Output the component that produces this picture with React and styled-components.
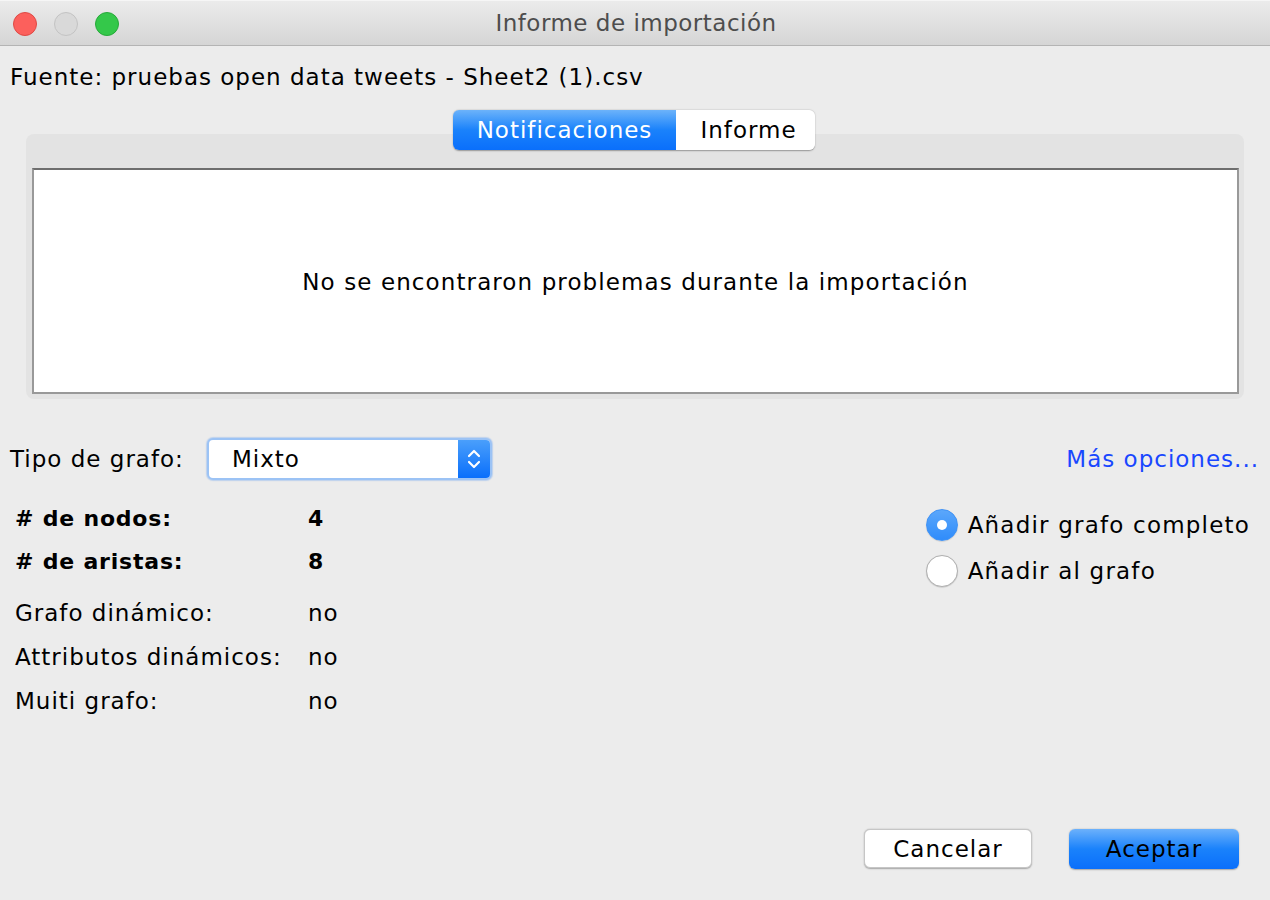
import React from "react";
import styled, { createGlobalStyle } from "styled-components";

const GlobalStyle = createGlobalStyle`
  html, body {
    margin: 0;
    padding: 0;
    background: #ececec;
  }
  body {
    font-family: "DejaVu Sans", "Noto Sans", sans-serif;
    font-size: 23px;
    letter-spacing: 1px;
    color: #000;
  }
`;

const Window = styled.div`
  width: 1270px;
  height: 900px;
  display: flex;
  flex-direction: column;
  background: #ececec;
  overflow: hidden;
`;

const TitleBar = styled.div`
  height: 44px;
  flex-shrink: 0;
  position: relative;
  display: flex;
  align-items: center;
  justify-content: center;
  background: linear-gradient(#ebebeb, #d5d5d5);
  border-bottom: 1px solid #b4b4b4;
  border-top: 1px solid #f6f6f6;
`;

const Lights = styled.div`
  position: absolute;
  left: 13px;
  top: 11px;
  display: flex;
  gap: 17px;
`;

const Light = styled.span`
  width: 24px;
  height: 24px;
  border-radius: 50%;
  box-sizing: border-box;
  background: ${(p) => p.color};
  border: 1px solid ${(p) => p.edge};
`;

const Title = styled.div`
  font-size: 23px;
  letter-spacing: 0.5px;
  color: #4d4d4d;
  padding-left: 2px;
`;

const Body = styled.div`
  flex: 1;
  display: flex;
  flex-direction: column;
  padding: 16px 31px 31px 10px;
`;

const Source = styled.div`
  line-height: 30px;
`;

const TabArea = styled.div`
  position: relative;
  margin: 18px -5px 0 16px;
  padding-top: 24px;
`;

const Tabs = styled.div`
  position: absolute;
  top: 0;
  left: 427px;
  display: flex;
  z-index: 1;
  border-radius: 6px;
  box-shadow: 0 0.5px 1.5px rgba(0, 0, 0, 0.35);
`;

const Tab = styled.div`
  height: 40px;
  width: ${(p) => (p.active ? 223 : 139)}px;
  display: flex;
  align-items: center;
  justify-content: center;
  box-sizing: border-box;
  padding-left: ${(p) => (p.active ? 0 : 6)}px;
  color: ${(p) => (p.active ? "#fff" : "#000")};
  background: ${(p) =>
    p.active ? "linear-gradient(#6cb3fa, #1a82fb 50%, #0a6ffb)" : "#fff"};
  border-radius: ${(p) => (p.active ? "6px 0 0 6px" : "0 6px 6px 0")};
`;

const Panel = styled.div`
  background: #e3e3e3;
  border-radius: 8px;
  padding: 34px 5px 5px 6px;
`;

const Content = styled.div`
  height: 226px;
  background: #fff;
  border: 2px solid #999;
  border-top-color: #6e6e6e;
  box-sizing: border-box;
  display: flex;
  align-items: center;
  justify-content: center;
  padding-top: 2px;
  letter-spacing: 1.1px;
`;

const TypeRow = styled.div`
  margin-top: 38px;
  display: flex;
  align-items: center;
  height: 44px;
`;

const Label = styled.span`
  width: 197px;
`;

const Select = styled.div`
  width: 285px;
  height: 42px;
  box-sizing: border-box;
  display: flex;
  border-radius: 6px;
  border: 2px solid #9cc3f5;
  background: #fff;
  overflow: hidden;
  box-shadow: 0 0 1px 1px rgba(120, 170, 240, 0.4);
`;

const SelectValue = styled.div`
  flex: 1;
  display: flex;
  align-items: center;
  padding-left: 23px;
`;

const Stepper = styled.div`
  width: 32px;
  display: flex;
  align-items: center;
  justify-content: center;
  background: linear-gradient(#4a9ffb, #0a6ffb);
`;

const Link = styled.span`
  margin-left: auto;
  margin-right: -20px;
  color: #1947ff;
`;

const Lower = styled.div`
  display: flex;
  margin-top: 16px;
`;

const Stats = styled.div`
  display: grid;
  grid-template-columns: 293px auto;
  align-content: start;
  padding-left: 5px;
`;

const Cell = styled.div`
  height: ${(p) => p.h}px;
  margin-top: ${(p) => p.gap || 0}px;
  display: flex;
  align-items: center;
  font-weight: ${(p) => (p.bold ? 700 : 400)};
  font-size: ${(p) => (p.bold ? "22px" : "23px")};
  letter-spacing: ${(p) => (p.bold ? "0.8px" : "1px")};
`;

const Radios = styled.div`
  margin-left: auto;
  margin-right: -11px;
  display: flex;
  flex-direction: column;
  gap: 14px;
  padding-top: 12px;
`;

const RadioRow = styled.label`
  display: flex;
  align-items: center;
  gap: 10px;
  height: 32px;
  letter-spacing: 1.2px;
`;

const RadioDot = styled.span`
  width: 32px;
  height: 32px;
  box-sizing: border-box;
  border-radius: 50%;
  display: flex;
  align-items: center;
  justify-content: center;
  background: ${(p) => (p.on ? "linear-gradient(#5ba7fb, #2f8cfb)" : "#fff")};
  border: 1px solid ${(p) => (p.on ? "#3f92f5" : "#b0b0b0")};
  box-shadow: 0 0.5px 1px rgba(0, 0, 0, 0.2);
  &::after {
    content: "";
    display: ${(p) => (p.on ? "block" : "none")};
    width: 10px;
    height: 10px;
    border-radius: 50%;
    background: #fff;
  }
`;

const Footer = styled.div`
  margin-top: auto;
  display: flex;
  justify-content: flex-end;
  gap: 37px;
`;

const Button = styled.button`
  font-family: inherit;
  font-size: 23px;
  letter-spacing: 1px;
  color: #000;
  height: ${(p) => (p.primary ? 40 : 39)}px;
  width: ${(p) => (p.primary ? 170 : 168)}px;
  border-radius: 6px;
  border: ${(p) => (p.primary ? "none" : "1px solid #c6c6c6")};
  background: ${(p) =>
    p.primary ? "linear-gradient(#6cb1fb, #1a82fb 50%, #0a6ffb)" : "#fff"};
  box-shadow: 0 0.5px 1.5px rgba(0, 0, 0, 0.3);
  padding: 0;
`;

const stats = [
  { label: "# de nodos:", value: "4", bold: true, h: 43 },
  { label: "# de aristas:", value: "8", bold: true, h: 43 },
  { label: "Grafo dinámico:", value: "no", h: 44, gap: 8 },
  { label: "Attributos dinámicos:", value: "no", h: 44 },
  { label: "Muiti grafo:", value: "no", h: 44 },
];

const App = () => {
  return (
    <Window>
      <GlobalStyle />
      <TitleBar>
        <Lights>
          <Light color="#fc605c" edge="#de4a45" />
          <Light color="#d9d9d9" edge="#c3c3c3" />
          <Light color="#34c84a" edge="#27a93a" />
        </Lights>
        <Title>Informe de importación</Title>
      </TitleBar>
      <Body>
        <Source>Fuente: pruebas open data tweets - Sheet2 (1).csv</Source>
        <TabArea>
          <Tabs>
            <Tab active>Notificaciones</Tab>
            <Tab>Informe</Tab>
          </Tabs>
          <Panel>
            <Content>No se encontraron problemas durante la importación</Content>
          </Panel>
        </TabArea>
        <TypeRow>
          <Label>Tipo de grafo:</Label>
          <Select>
            <SelectValue>Mixto</SelectValue>
            <Stepper>
              <svg width="16" height="26" viewBox="0 0 16 26" fill="none">
                <path d="M3 10 L8 5 L13 10" stroke="#fff" strokeWidth="2.2" strokeLinecap="round" strokeLinejoin="round" />
                <path d="M3 16 L8 21 L13 16" stroke="#fff" strokeWidth="2.2" strokeLinecap="round" strokeLinejoin="round" />
              </svg>
            </Stepper>
          </Select>
          <Link>Más opciones...</Link>
        </TypeRow>
        <Lower>
          <Stats>
            {stats.map((s) => (
              <React.Fragment key={s.label}>
                <Cell bold={s.bold} h={s.h} gap={s.gap}>{s.label}</Cell>
                <Cell bold={s.bold} h={s.h} gap={s.gap}>{s.value}</Cell>
              </React.Fragment>
            ))}
          </Stats>
          <Radios>
            <RadioRow>
              <RadioDot on />
              Añadir grafo completo
            </RadioRow>
            <RadioRow>
              <RadioDot />
              Añadir al grafo
            </RadioRow>
          </Radios>
        </Lower>
        <Footer>
          <Button>Cancelar</Button>
          <Button primary>Aceptar</Button>
        </Footer>
      </Body>
    </Window>
  );
};

export default App;
